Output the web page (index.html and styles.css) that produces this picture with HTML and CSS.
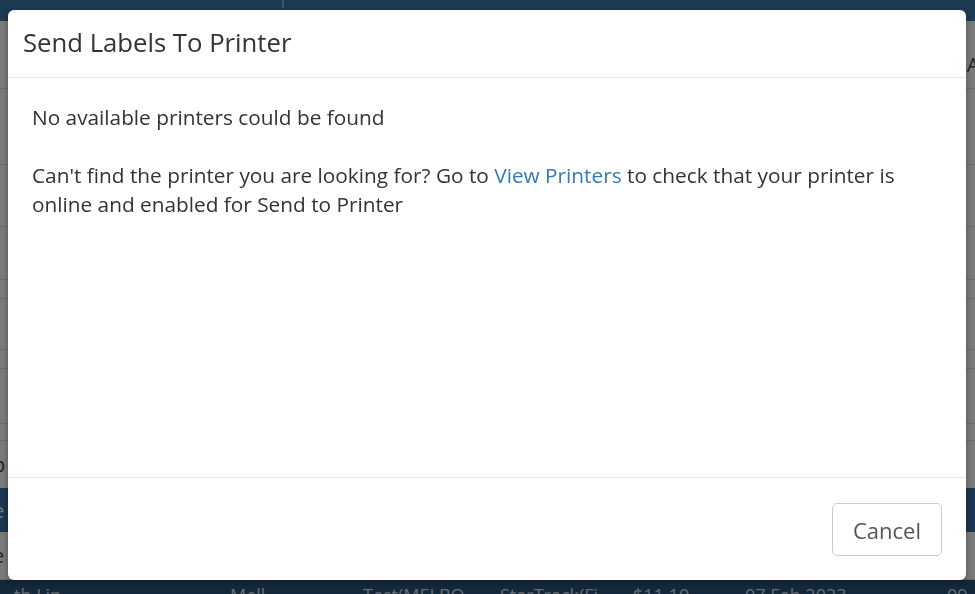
FILE: index.html
```html
<!DOCTYPE html>
<html lang="en">
<head>
<meta charset="utf-8">
<title>Send Labels To Printer</title>
<link rel="stylesheet" href="styles.css">
</head>
<body>
<div class="page">
  <div class="topbar"><span class="tick"></span></div>
  <div class="table">
    <div class="row r-head"><span class="cell-l"></span><span class="cell-r">Ac</span></div>
    <div class="row r1"></div>
    <div class="row r2"></div>
    <div class="row r3"></div>
    <div class="row r4"></div>
    <div class="row r5"><span class="cell-l"></span><span class="cell-r">N</span></div>
    <div class="row r6"></div>
    <div class="row r7"></div>
    <div class="row r8"></div>
    <div class="row r9"><span class="cell-l">p</span><span class="cell-r">A</span></div>
    <div class="row r10 sel"><span class="cell-l">e</span><span class="cell-r">N</span></div>
    <div class="row r11"><span class="cell-l">e</span><span class="cell-r">N</span></div>
    <div class="row r12 dark">
      <span class="c c1">th Lin</span>
      <span class="c c2">Mell</span>
      <span class="c c3">Test(MELBO</span>
      <span class="c c4">StarTrack(Fi</span>
      <span class="c c5">$11.10</span>
      <span class="c c6">07 Feb 2023</span>
      <span class="c c7">09</span>
    </div>
  </div>
</div>
<div class="backdrop"></div>
<div class="modal" role="dialog">
  <div class="modal-header">
    <h4 class="modal-title">Send Labels To Printer</h4>
  </div>
  <div class="modal-body">
    <p>No available printers could be found</p>
    <p>Can't find the printer you are looking for? Go to <a href="#" class="link">View Printers</a> to check that your printer is online and enabled for Send to Printer</p>
  </div>
  <div class="modal-footer">
    <button class="btn" type="button">Cancel</button>
  </div>
</div>
</body>
</html>
```
FILE: styles.css
```css
* { box-sizing: border-box; }
html, body {
  margin: 0;
  padding: 0;
  width: 975px;
  height: 594px;
  overflow: hidden;
  font-family: "Open Sans", "Liberation Sans", sans-serif;
  color: #333;
}
.page {
  width: 975px;
  height: 594px;
  display: flex;
  flex-direction: column;
  background: #f6f6f6;
}
.topbar {
  height: 21px;
  background: #3a72a6;
  position: relative;
  flex: none;
}
.tick {
  position: absolute;
  left: 282px;
  top: 0;
  width: 2px;
  height: 8px;
  background: #8aa8c4;
}
.table {
  flex: 1;
  display: flex;
  flex-direction: column;
}
.row {
  flex: none;
  display: flex;
  align-items: center;
  justify-content: space-between;
  border-bottom: 1px solid #d6d6d6;
  font-size: 20px;
  color: #444;
}
.cell-l { margin-left: -7px; }
.cell-r { margin-right: -14px; }
.r-head { height: 68px; align-items: flex-end; padding-bottom: 10px; }
.r1 { height: 76px; }
.r2 { height: 62px; }
.r3 { height: 53px; }
.r4 { height: 19px; }
.r5 { height: 51px; }
.r6 { height: 19px; }
.r7 { height: 55px; }
.r8 { height: 17px; }
.r9 { height: 47px; border-bottom: none; }
.sel { height: 44px; background: #356ca3; color: #e9eef4; border-bottom: none; }
.r11 { height: 48px; }
.dark {
  height: 40px;
  background: #295177;
  color: #c9d6e3;
  border-bottom: none;
  position: relative;
  font-size: 18px;
}
.c { position: absolute; top: 3px; white-space: nowrap; }
.c1 { left: 14px; }
.c2 { left: 230px; }
.c3 { left: 363px; }
.c4 { left: 500px; }
.c5 { left: 633px; }
.c6 { left: 745px; }
.c7 { left: 947px; }

.backdrop {
  position: fixed;
  inset: 0;
  background: rgba(0, 0, 0, 0.5);
}

.modal {
  position: fixed;
  left: 8px;
  top: 10px;
  width: 958px;
  height: 570px;
  background: #fff;
  border-radius: 6px;
  box-shadow: 0 2px 6px rgba(0, 0, 0, 0.35);
  display: flex;
  flex-direction: column;
}
.modal-header {
  flex: none;
  height: 68px;
  padding: 0 15px;
  display: flex;
  align-items: center;
  border-bottom: 1px solid #e5e5e5;
}
.modal-title {
  margin: 0;
  font-size: 25.7px;
  font-weight: 400;
  color: #333;
  line-height: 1.2;
  padding-bottom: 1px;
}
.modal-body {
  flex: 1;
  padding: 25px 24px 0 24px;
  font-size: 20.8px;
  line-height: 29px;
  color: #333;
}
.modal-body p {
  margin: 0 0 29px 0;
}
.link {
  color: #337ab7;
  text-decoration: none;
}
.modal-footer {
  flex: none;
  height: 103px;
  border-top: 1px solid #e5e5e5;
  display: flex;
  justify-content: flex-end;
  align-items: flex-start;
  padding: 25px 24px 0 0;
}
.btn {
  width: 110px;
  height: 53px;
  border: 1px solid #ccc;
  border-radius: 5px;
  background: #fff;
  color: #555;
  font-family: "Open Sans", "Liberation Sans", sans-serif;
  font-size: 22px;
  padding: 0;
}
```
